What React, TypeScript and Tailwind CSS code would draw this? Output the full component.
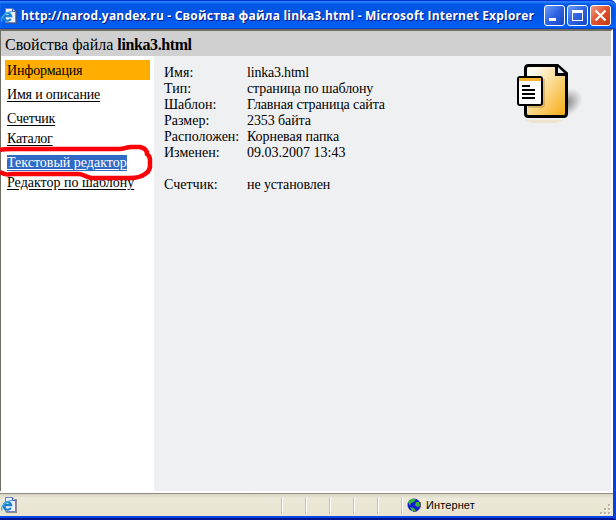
const menu = [
  { label: "Имя и описание", row: "h-6", tracking: "tracking-[-0.19px]" },
  { label: "Счетчик", row: "h-6", tracking: "tracking-[-0.25px]" },
  { label: "Каталог", row: "h-4", tracking: "tracking-[-0.25px]" },
];

const details = [
  { name: "Имя:", value: "linka3.html", tracking: "tracking-[-0.2px]" },
  { name: "Тип:", value: "страница по шаблону", tracking: "tracking-[-0.1px]" },
  { name: "Шаблон:", value: "Главная страница сайта", tracking: "tracking-[-0.14px]" },
  { name: "Размер:", value: "2353 байта", tracking: "tracking-[-0.1px]" },
  { name: "Расположен:", value: "Корневая папка", tracking: "tracking-[-0.05px]" },
  { name: "Изменен:", value: "09.03.2007 13:43", tracking: "" },
  { name: "", value: "", tracking: "" },
  { name: "Счетчик:", value: "не установлен", tracking: "tracking-[-0.1px]" },
];

function PageIcon() {
  return (
    <svg width="16" height="16" viewBox="0 0 16 16" className="shrink-0">
      <path d="M5 2h11v14H5z" fill="#50506a" opacity=".6" />
      <path d="M4.500.5h7l3 3v11h-10z" fill="#eef3fd" stroke="#7080c0" />
      <path d="M11.500.5v3h3" fill="#bdcdf4" stroke="#4060b0" />
      <path d="M9.800 10.800A3.800 3.800 0 1 1 10.200 8.200H4" fill="none" stroke="#1c7fce" strokeWidth="2.200" />
      <path d="M1 13.500C-1 10 4 4 11 3.500" fill="none" stroke="#43b0ed" strokeWidth="1.400" />
    </svg>
  );
}

function TitleBar() {
  return (
    <header className="flex h-[29px] shrink-0 items-center rounded-tr-md bg-linear-to-b from-[#0058e6] via-[#0054e3] to-[#0061fc] pr-[5px] pl-[1px] pt-[2px] shadow-[inset_0_1px_0_#0831d9,inset_0_3px_2px_#2a83ff,inset_0_-1px_0_#0040c4]">
      <PageIcon />
      <h1 className="ml-1 w-[517px] shrink-0 whitespace-nowrap font-['Open_Sans','Noto_Sans',sans-serif] text-[12px] leading-4 font-bold tracking-[0.2px] text-white [text-shadow:1px_1px_0_#0a1883]">
        http://narod.yandex.ru - Свойства файла linka3.html - Microsoft Internet Explorer
      </h1>
      <div className="ml-[6px] flex gap-[2px]">
        <button className="h-[21px] w-[21px] rounded-[3px] border border-white bg-linear-to-br from-[#6f9dfa] via-[#2d62e0] to-[#1546c8]">
          <svg width="19" height="19" viewBox="0 0 19 19">
            <path d="M4 12h7v3H4z" fill="#fff" />
          </svg>
        </button>
        <button className="h-[21px] w-[21px] rounded-[3px] border border-white bg-linear-to-br from-[#6f9dfa] via-[#2d62e0] to-[#1546c8]">
          <svg width="19" height="19" viewBox="0 0 19 19">
            <path d="M4 4h11v11H4zM5 7v7h9V7z" fill="#fff" fillRule="evenodd" />
          </svg>
        </button>
        <button className="h-[21px] w-[21px] rounded-[3px] border border-white bg-linear-to-br from-[#f09a82] via-[#e0502c] to-[#c13a12]">
          <svg width="19" height="19" viewBox="0 0 19 19">
            <path d="M4.500 4.500l10 10M14.500 4.500l-10 10" stroke="#fff" strokeWidth="2.200" />
          </svg>
        </button>
      </div>
    </header>
  );
}

function DocumentIcon() {
  return (
    <svg width="70" height="66" viewBox="0 0 70 66">
      <defs>
        <linearGradient id="sheet" x1="0" y1="0" x2="1" y2="1">
          <stop offset="0.150" stopColor="#fffaf0" />
          <stop offset="0.500" stopColor="#fbd98c" />
          <stop offset="1" stopColor="#f6a80d" />
        </linearGradient>
        <radialGradient id="shade">
          <stop offset="0" stopColor="#555" stopOpacity=".75" />
          <stop offset="1" stopColor="#777" stopOpacity="0" />
        </radialGradient>
      </defs>
      <ellipse cx="50" cy="42" rx="18" ry="13" fill="url(#shade)" transform="rotate(-35 50 42)" />
      <path d="M8 59h40l-8 3H16z" fill="#f4c98a" opacity=".35" />
      <path d="M12.500 4.500h29l9 8v40q0 3-3 3h-35q-3 0-3-3v-45q0-3 3-3z" fill="url(#sheet)" stroke="#000" strokeWidth="3" />
      <path d="M40.500 4.500v9h9" fill="#eee" stroke="#000" strokeWidth="3" />
      <path d="M27 18v27H12v2h13q4 0 4-4V18z" fill="#8a6320" opacity=".3" />
      <rect x="2" y="16" width="24" height="28" rx="2" fill="#fff" stroke="#000" strokeWidth="2" />
      <path d="M3 17h22v3H3z" fill="#f8b52d" />
      <path d="M6 25h8M6 29h13M6 33h13M6 37h13" stroke="#000" strokeWidth="2" />
    </svg>
  );
}

function Sidebar() {
  return (
    <nav className="relative w-[153px] shrink-0 bg-white pt-1">
      <div className="ml-1 h-5 w-[145px] bg-[#ffae00] pl-[2px] leading-[21px] tracking-[-0.15px]">Информация</div>
      <ul className="pt-[3px] pl-[6px]">
        {menu.map((item) => (
          <li key={item.label} className={`flex items-center ${item.row} ${item.tracking}`}>
            <a className="underline underline-offset-2">{item.label}</a>
          </li>
        ))}
        <li className="flex h-7 items-center pt-[3px]">
          <a className="bg-[#316ac5] leading-4 text-white underline underline-offset-2">Текстовый редактор</a>
        </li>
        <li className="flex h-4 items-center">
          <a className="underline underline-offset-2">Редактор по шаблону</a>
        </li>
      </ul>
      {/* hand-drawn marker loop around the editor link */}
      <svg className="absolute top-[87px] left-[-1px]" width="156" height="42" viewBox="0 0 156 42">
        <path
          d="M0 7C3 6 8 6 12 6H119C125 6 126 4 131 4H140C145 5 147 8 147 11Q150 13 150 17V24Q149 29 145 31C141 34 136 35 130 35H91C83 33 84 31 78 31H12C6 32 4 31 0 29"
          fill="none"
          stroke="#fb0007"
          strokeWidth="4.500"
        />
      </svg>
    </nav>
  );
}

function StatusBar() {
  return (
    <footer className="flex h-[22px] shrink-0 items-center bg-linear-to-b from-[#d8d5c5] via-[#ece9d8] via-20% to-[#e7e4d0] pl-[1px]">
      <PageIcon />
      <div className="ml-[264px] flex">
        {[0, 1, 2, 3, 4, 5].map((n) => (
          <div key={n} className="h-[17px] w-6 border-l border-[#c9c5b2] shadow-[inset_1px_0_0_#fff]" />
        ))}
      </div>
      <svg width="14" height="14" viewBox="0 0 14 14" className="-ml-[18px] shrink-0">
        <circle cx="7" cy="7" r="6.500" fill="#1017d8" />
        <path d="M1 4L4 1l5 0-2 3-3 1-1 3zM9 4l3 0 1 4-3 1-2-2zM3 9l4 1 2 3-4 0z" fill="#36b535" />
        <path d="M13 4a6.500 6.500 0 0 1-7 9.500" fill="none" stroke="#222" opacity=".6" />
      </svg>
      <span className="ml-[5px] font-['Liberation_Sans',sans-serif] text-[11px] tracking-[0.1px]">Интернет</span>
      <svg width="12" height="12" viewBox="0 0 12 12" className="mt-[9px] mr-[1px] ml-auto">
        <path d="M9 1h2v2H9zM5 5h2v2H5zM9 5h2v2H9zM1 9h2v2H1zM5 9h2v2H5zM9 9h2v2H9z" fill="#fff" />
        <path d="M8 0h2v2H8zM4 4h2v2H4zM8 4h2v2H8zM0 8h2v2H0zM4 8h2v2H4zM8 8h2v2H8z" fill="#b8b4a2" />
      </svg>
    </footer>
  );
}

export default function App() {
  return (
    <div className="flex h-[520px] w-[616px] flex-col overflow-hidden bg-white font-['Liberation_Serif',serif] text-[14px] leading-4 text-black">
      <TitleBar />
      <div className="flex min-h-0 grow flex-col border-r-[3px] border-b-2 border-r-[#0442dc] border-b-[#00138c]">
        <div className="flex min-h-0 grow flex-col border-t-2 border-r-2 border-l border-[#716f64] border-r-white">
          <div className="h-[25px] shrink-0 bg-[#d0d0d0] pl-1 text-[16px] leading-[28px] whitespace-nowrap">
            Свойства файла <b className="tracking-[-0.4px]">linka3.html</b>
          </div>
          <main className="flex min-h-0 grow bg-[#eff0f2]">
            <Sidebar />
            <section className="flex grow justify-between pt-[5px] pr-[25px] pl-[10px]">
              <dl className="mt-1 grid auto-rows-[16px] grid-cols-[83px_auto] content-start whitespace-nowrap">
                {details.map((d, i) => (
                  <div key={i} className="contents">
                    <dt>{d.name}</dt>
                    <dd className={d.tracking}>{d.value}</dd>
                  </div>
                ))}
              </dl>
              <DocumentIcon />
            </section>
          </main>
        </div>
        <div className="h-[2px] shrink-0 bg-white" />
        <div className="h-px shrink-0 bg-[#8f8c80]" />
        <StatusBar />
        <div className="h-[2px] shrink-0 bg-[#0546e4]" />
      </div>
    </div>
  );
}
